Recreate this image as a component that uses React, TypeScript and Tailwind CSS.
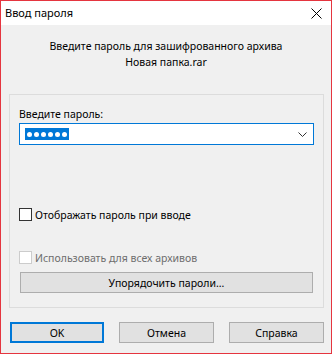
import React from "react";

function Check({ disabled }: { disabled?: boolean }) {
  return (
    <div
      className={
        "w-[13px] h-[13px] shrink-0 border bg-white " +
        (disabled ? "border-[#cccccc]" : "border-[#333333]")
      }
    />
  );
}

export default function App() {
  const font = { fontFamily: '"Noto Sans", "Segoe UI", sans-serif' };
  return (
    <div
      className="w-[332px] h-[354px] border border-[#e5353f] bg-[#f0f0f0] flex flex-col text-[10.5px] leading-[16px] text-black"
      style={font}
    >
      <div className="h-[24px] bg-white flex items-center justify-between pl-[4px] pr-[9px]">
        <span className="text-[11px]">Ввод пароля</span>
        <svg width="11" height="11" viewBox="0 0 11 11">
          <path d="M0.5 0.5 L10.5 10.5 M10.5 0.5 L0.5 10.5" stroke="#000" strokeWidth="1" />
        </svg>
      </div>
      <div className="mt-[13px] flex flex-col items-center">
        <div>Введите пароль для зашифрованного архива</div>
        <div>Новая папка.rar</div>
      </div>
      <div className="ml-[8px] mt-[24px] w-[315px] h-[214px] border border-[#dcdcdc] flex flex-col pl-[9px] pt-[11px]">
        <div className="h-[16px]">Введите пароль:</div>
        <div className="mt-[1px] w-[295px] h-[22px] border border-[#0078d7] bg-white flex items-center justify-between pl-[5px] pr-[6px]">
          <span className="bg-[#0078d7] h-[12px] px-[2px] flex items-center gap-[2px]">
            {[0, 1, 2, 3, 4, 5].map((i) => (
              <span key={i} className="w-[5px] h-[5px] rounded-full bg-white" />
            ))}
          </span>
          <svg width="9" height="5" viewBox="0 0 9 5">
            <path d="M0.5 0.5 L4.5 4.5 L8.5 0.5" fill="none" stroke="#333" strokeWidth="1" />
          </svg>
        </div>
        <div className="mt-[63px] flex items-center gap-[3px] h-[13px]">
          <Check />
          <span>Отображать пароль при вводе</span>
        </div>
        <div className="mt-[30px] flex items-center gap-[3px] h-[13px] text-[#6d6d6d]">
          <Check disabled />
          <span>Использовать для всех архивов</span>
        </div>
        <div className="mt-[8px] ml-[1px] w-[293px] h-[21px] bg-[#e1e1e1] border border-[#adadad] flex items-center justify-center">
          Упорядочить пароли...
        </div>
      </div>
      <div className="mt-[14px] flex pl-[9px] gap-[15px]">
        <div className="w-[94px] h-[21px] bg-[#e1e1e1] border-2 border-[#0078d7] flex items-center justify-center">OK</div>
        <div className="w-[95px] h-[21px] bg-[#e1e1e1] border border-[#adadad] flex items-center justify-center">Отмена</div>
        <div className="w-[95px] h-[21px] bg-[#e1e1e1] border border-[#adadad] flex items-center justify-center">Справка</div>
      </div>
    </div>
  );
}
